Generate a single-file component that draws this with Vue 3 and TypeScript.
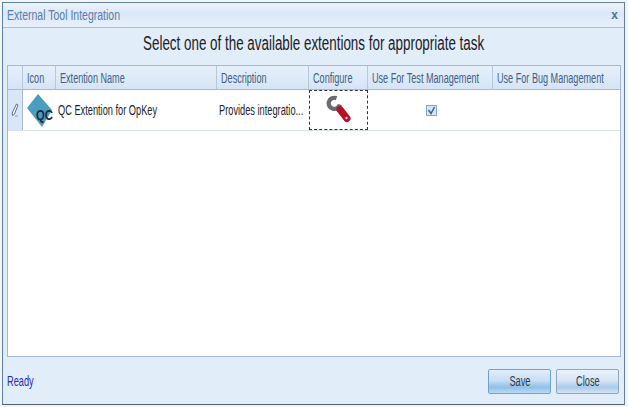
<script setup lang="ts">
interface Column { label: string; width: string }
const columns: Column[] = [
  { label: '', width: '15px' },
  { label: 'Icon', width: '33px' },
  { label: 'Extention Name', width: '161px' },
  { label: 'Description', width: '92px' },
  { label: 'Configure', width: '59px' },
  { label: 'Use For Test Management', width: '125px' },
  { label: 'Use For Bug Management', width: '1fr' },
]
const template = columns.map((c) => c.width).join(' ')
</script>

<template>
  <div class="page">
    <div class="window">
      <header class="titlebar">
        <span class="title squeeze">External Tool Integration</span>
        <span class="close-x">x</span>
      </header>
      <div class="heading"><span class="squeeze mid">Select one of the available extentions for appropriate task</span></div>
      <div class="grid">
        <div class="head" :style="{ gridTemplateColumns: template }">
          <div v-for="c in columns" :key="c.label" class="hcell"><span class="squeeze">{{ c.label }}</span></div>
        </div>
        <div class="row" :style="{ gridTemplateColumns: template }">
          <div class="indicator">
            <svg width="8" height="14" viewBox="0 0 8 14">
              <path d="M5.5 1 L7 2 L3.5 11 L1.5 12.5 L1.2 10 Z" fill="#fff" stroke="#5a6f8c" stroke-width="1" />
              <path d="M4 13 H7" stroke="#8a9bb3" stroke-width="1" />
            </svg>
          </div>
          <div class="cell icon-cell">
            <svg class="qc-icon" width="30" height="35" viewBox="0 0 30 35">
              <path d="M12 1 L26 17 L16 34 L1 15 Z" fill="#4b9cc1" />
              <text x="10" y="27" class="qc" textLength="17" lengthAdjust="spacingAndGlyphs">QC</text>
            </svg>
          </div>
          <div class="cell name"><span class="squeeze">QC Extention for OpKey</span></div>
          <div class="cell desc"><span class="squeeze">Provides integratio...</span></div>
          <div class="cell configure">
            <svg width="26" height="30" viewBox="0 0 26 30">
              <path d="M10.5 3.2 A5.6 5.6 0 1 0 13.8 9.5" fill="none" stroke="#6a6a6e" stroke-width="4.2" />
              <path d="M14 14.5 L21 23.5" stroke="#b5112a" stroke-width="7" stroke-linecap="round" />
              <circle cx="20.5" cy="23" r="1.2" fill="#f2c7cd" />
            </svg>
          </div>
          <div class="cell check-cell">
            <span class="checkbox">
              <svg width="9" height="9" viewBox="0 0 9 9">
                <path d="M1.5 4 L4 7.5 L7.5 1" fill="none" stroke="#3a5f9e" stroke-width="1.5" />
              </svg>
            </span>
          </div>
          <div class="cell"></div>
        </div>
      </div>
      <footer class="footer">
        <span class="status squeeze">Ready</span>
        <div class="buttons">
          <button class="btn primary" type="button"><span class="squeeze mid">Save</span></button>
          <button class="btn" type="button"><span class="squeeze mid">Close</span></button>
        </div>
      </footer>
    </div>
  </div>
</template>

<style scoped>
.page {
  width: 628px;
  height: 407px;
  box-sizing: border-box;
  padding: 2px 3px 2px 2px;
  background: #f4f5f7;
  font-family: "Liberation Sans", sans-serif;
}
.squeeze {
  display: inline-block;
  white-space: nowrap;
  transform: scaleX(0.66);
  transform-origin: left center;
}
.squeeze.mid {
  transform-origin: center center;
}
.window {
  box-sizing: border-box;
  height: 403px;
  display: flex;
  flex-direction: column;
  border: 1px solid #5f7fa8;
  border-bottom-color: #4c5f78;
  background: #e2edfa;
  padding: 0 3px 0 4px;
}
.titlebar {
  height: 25px;
  margin: 0 -3px 0 -4px;
  padding: 0 6px 0 4px;
  display: flex;
  align-items: center;
  justify-content: space-between;
  background: linear-gradient(#eef5fd, #d9e7f7 45%, #e8f1fb);
  border-bottom: 1px solid #a9bfd8;
  box-sizing: border-box;
}
.title {
  font-size: 14px;
  color: #5b7fa6;
  transform: scaleX(0.75);
}
.close-x {
  font-size: 12px;
  font-weight: 700;
  color: #54708f;
}
.heading {
  box-sizing: border-box;
  height: 37px;
  padding-bottom: 6px;
  display: flex;
  align-items: center;
  justify-content: center;
  font-size: 20px;
  color: #1c2026;
}
.heading .squeeze {
  transform: scaleX(0.67);
}
.grid {
  box-sizing: border-box;
  height: 292px;
  border: 1px solid #a5bad2;
  background: #fff;
}
.head {
  box-sizing: border-box;
  display: grid;
  height: 24px;
  background: linear-gradient(#e6f0fb, #d5e4f6);
  border-bottom: 1px solid #a5bad2;
}
.hcell {
  display: flex;
  align-items: center;
  padding-left: 4px;
  font-size: 14px;
  color: #3f5f85;
  border-right: 1px solid #b4c8de;
  min-width: 0;
}
.hcell .squeeze {
  transform: scaleX(0.65);
}
.hcell:last-child {
  border-right: none;
}
.row {
  box-sizing: border-box;
  display: grid;
  height: 41px;
  border-bottom: 1px solid #d6e2ef;
}
.indicator {
  display: flex;
  align-items: center;
  justify-content: center;
  background: #d8e6f6;
  border-right: 1px solid #a5bad2;
}
.cell {
  display: flex;
  align-items: center;
  font-size: 14px;
  color: #20242a;
  min-width: 0;
}
.icon-cell {
  padding-left: 3px;
}
.qc-icon {
  flex: none;
}
.qc {
  font-size: 14px;
  font-weight: 700;
  fill: #1f2a36;
}
.name,
.desc {
  padding-left: 2px;
}
.configure {
  justify-content: center;
  border: 1px dashed #333;
  box-sizing: border-box;
}
.check-cell {
  justify-content: center;
  padding-left: 1px;
}
.checkbox {
  box-sizing: border-box;
  width: 11px;
  height: 11px;
  display: flex;
  align-items: center;
  justify-content: center;
  border: 1px solid #8aa4c4;
  background: #d7e5f6;
}
.footer {
  flex: 1;
  display: flex;
  align-items: center;
  justify-content: space-between;
  padding-top: 1px;
}
.status {
  font-size: 14px;
  color: #2b2bb0;
}
.buttons {
  display: flex;
  gap: 5px;
  padding-right: 2px;
}
.btn {
  box-sizing: border-box;
  width: 63px;
  height: 25px;
  border: 1px solid #8fa6c0;
  border-radius: 2px;
  font-family: inherit;
  font-size: 14px;
  color: #2a3a4e;
  background: linear-gradient(#eaf2fb, #d8e6f5 45%, #a9cbea 75%, #d3e4f5);
  padding: 0;
}
.btn.primary {
  border-color: #6ea3cc;
  background: linear-gradient(#e0eefa, #c8def3 45%, #8fc0e8 75%, #bcd9f2);
}
</style>
